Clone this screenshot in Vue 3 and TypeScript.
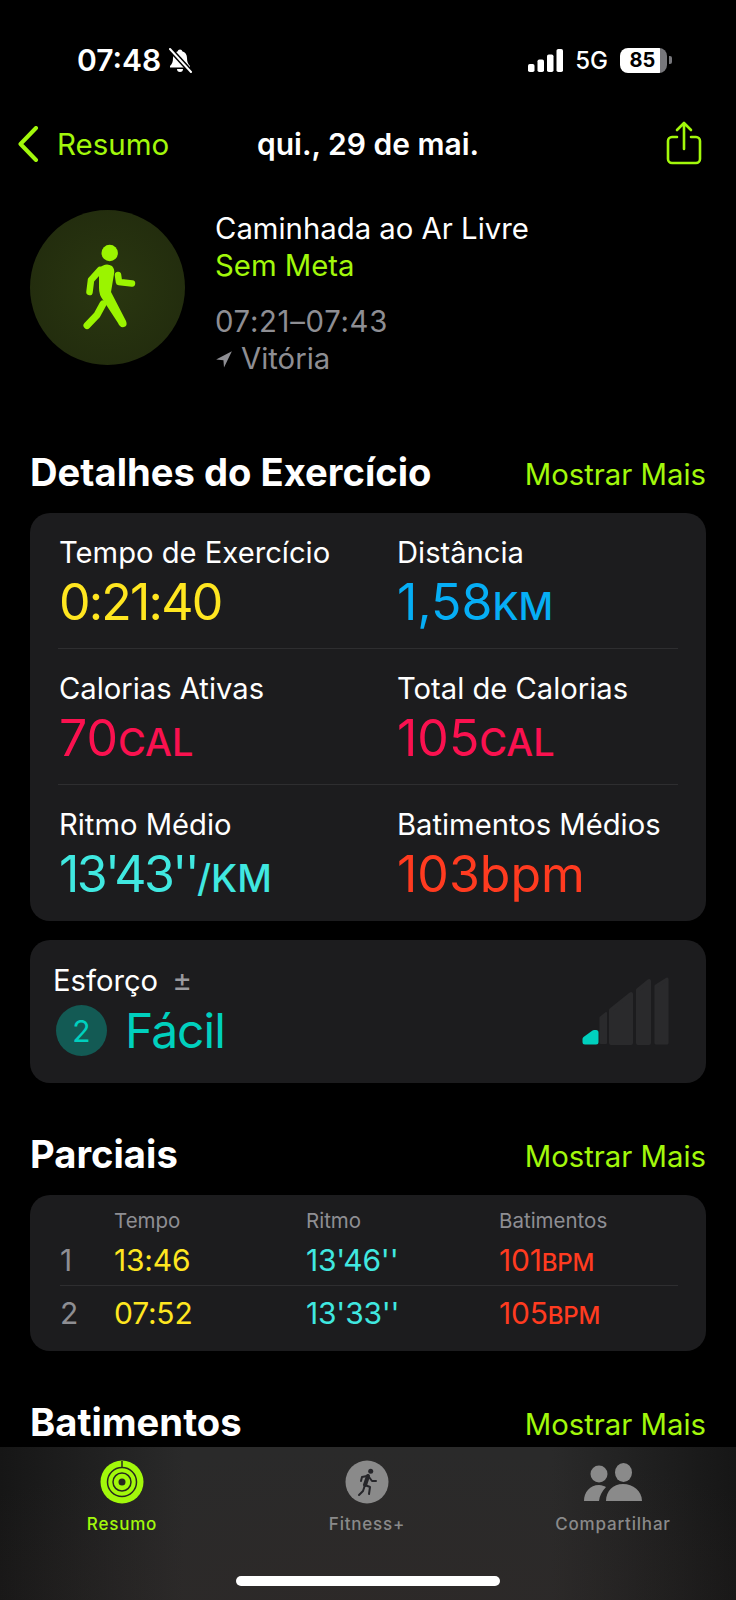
<script setup lang="ts">
interface Metric {
  label: string
  value: string
  unit?: string
  color: string
  spacing?: number
}

const metrics: Metric[] = [
  { label: 'Tempo de Exercício', value: '0:21:40', color: '#ffe620', spacing: -1.8 },
  { label: 'Distância', value: '1,58', unit: 'KM', color: '#06aef5' },
  { label: 'Calorias Ativas', value: '70', unit: 'CAL', color: '#fa114f' },
  { label: 'Total de Calorias', value: '105', unit: 'CAL', color: '#fa114f' },
  { label: 'Ritmo Médio', value: "13'43''", unit: '/KM', color: '#40e8e0', spacing: -2.6 },
  { label: 'Batimentos Médios', value: '103bpm', color: '#ff3b20' }
]

const splits = [
  { n: 1, time: '13:46', pace: "13'46''", bpm: '101' },
  { n: 2, time: '07:52', pace: "13'33''", bpm: '105' }
]
</script>

<template>
  <div class="page">
    <div class="status">
      <div class="status-left">
        <span class="clock">07:48</span>
        <svg class="bell" viewBox="0 0 26 26" width="26" height="26">
          <path d="M13 2.500c-1.300 0-2 .8-2.200 1.800C7.500 5.200 6 7.800 6 11c0 4-1 6-3 8v1.500h20V19c-2-2-3-4-3-8 0-3.200-1.500-5.800-4.800-6.700C15 3.300 14.300 2.500 13 2.500z" fill="#fff" />
          <path d="M10 22h6a3 3 0 0 1-6 0z" fill="#fff" />
          <path d="M3 2l21 23" stroke="#000" stroke-width="5" />
          <path d="M3 2l21 23" stroke="#fff" stroke-width="2" stroke-linecap="round" />
        </svg>
      </div>
      <div class="status-right">
        <svg viewBox="0 0 36 23" width="36" height="23">
          <rect x="0" y="15" width="6.500" height="8" rx="1.800" fill="#fff" />
          <rect x="9.500" y="10.500" width="6.500" height="12.500" rx="1.800" fill="#fff" />
          <rect x="19" y="5.500" width="6.500" height="17.500" rx="1.800" fill="#fff" />
          <rect x="28.500" y="0" width="6.500" height="23" rx="1.800" fill="#fff" />
        </svg>
        <span class="net">5G</span>
        <span class="battery"><span class="battery-num">85</span></span>
        <span class="battery-nub"></span>
      </div>
    </div>

    <div class="nav">
      <div class="nav-back">
        <svg viewBox="0 0 22 36" width="22" height="36">
          <path d="M19 2L3.500 18 19 34" fill="none" stroke="#a2f80b" stroke-width="4" stroke-linecap="round" stroke-linejoin="round" />
        </svg>
        <span>Resumo</span>
      </div>
      <div class="nav-title">qui., 29 de mai.</div>
      <svg class="nav-share" viewBox="0 0 36 44" width="36" height="44">
        <path d="M11 16H6a4 4 0 0 0-4 4v18a4 4 0 0 0 4 4h24a4 4 0 0 0 4-4V20a4 4 0 0 0-4-4h-5" fill="none" stroke="#a2f80b" stroke-width="2.600" stroke-linecap="round" />
        <path d="M18 28V2M11 9l7-7 7 7" fill="none" stroke="#a2f80b" stroke-width="2.600" stroke-linecap="round" stroke-linejoin="round" />
      </svg>
    </div>

    <div class="hero">
      <div class="hero-icon">
        <svg viewBox="0 0 155 155" width="155" height="155">
          <circle cx="79.700" cy="43" r="8.200" fill="#9bf400" />
          <path d="M69 58Q76 52 82 56Q85 59 84 64L81 82L96 111Q98 116 94 117Q90 118 88 113L73 90Q69 85 69 78z" fill="#9bf400" />
          <path d="M70 60L61 70L59.500 82" fill="none" stroke="#9bf400" stroke-width="6.500" stroke-linecap="round" stroke-linejoin="round" />
          <path d="M88 65L89 72L102 73.500" fill="none" stroke="#9bf400" stroke-width="6.500" stroke-linecap="round" stroke-linejoin="round" />
          <path d="M73 94L67 105L57 115.500" fill="none" stroke="#9bf400" stroke-width="7" stroke-linecap="round" stroke-linejoin="round" />
        </svg>
      </div>
      <div class="hero-text">
        <div class="hero-title">Caminhada ao Ar Livre</div>
        <div class="hero-goal">Sem Meta</div>
        <div class="hero-time">07:21–07:43</div>
        <div class="hero-place">
          <svg viewBox="0 0 16 16" width="18" height="18">
            <path d="M15 1L1 8.500l6.500.5.500 6.500z" fill="#8e8e93" />
          </svg>
          <span>Vitória</span>
        </div>
      </div>
    </div>

    <div class="section-head first">
      <h2>Detalhes do Exercício</h2>
      <span class="more">Mostrar Mais</span>
    </div>

    <div class="card metrics">
      <div v-for="m in metrics" :key="m.label" class="metric">
        <div class="metric-label">{{ m.label }}</div>
        <div class="metric-value" :style="{ color: m.color }"><span :style="{ letterSpacing: (m.spacing ?? 0) + 'px' }">{{ m.value }}</span><span v-if="m.unit" class="metric-unit">{{ m.unit }}</span></div>
      </div>
    </div>

    <div class="card effort">
      <div class="effort-text">
        <div class="effort-label">Esforço <span class="plusminus">±</span></div>
        <div class="effort-value">
          <span class="badge">2</span>
          <span class="effort-name">Fácil</span>
        </div>
      </div>
      <svg class="effort-bars" viewBox="0 0 88 68" width="88" height="68">
        <path d="M18.500 40.500L24 36V66H18.500z" fill="#2a2a2c" stroke="#2a2a2c" stroke-width="2" stroke-linejoin="round" />
        <path d="M29 33L49 17V66H29z" fill="#2a2a2c" stroke="#2a2a2c" stroke-width="4" stroke-linejoin="round" />
        <path d="M56 13L67 4V66H56z" fill="#2a2a2c" stroke="#2a2a2c" stroke-width="4" stroke-linejoin="round" />
        <path d="M74 9L85 2V66H74z" fill="#2a2a2c" stroke="#2a2a2c" stroke-width="3" stroke-linejoin="round" />
        <path d="M3 62L12 55.500H14V65H3z" fill="#00d0be" stroke="#00d0be" stroke-width="5" stroke-linejoin="round" />
      </svg>
    </div>

    <div class="section-head">
      <h2>Parciais</h2>
      <span class="more">Mostrar Mais</span>
    </div>

    <div class="card splits">
      <div class="split-head">
        <span></span>
        <span>Tempo</span>
        <span>Ritmo</span>
        <span>Batimentos</span>
      </div>
      <div v-for="s in splits" :key="s.n" class="split-row">
        <span class="split-n">{{ s.n }}</span>
        <span class="split-time">{{ s.time }}</span>
        <span class="split-pace">{{ s.pace }}</span>
        <span class="split-bpm">{{ s.bpm }}<small>BPM</small></span>
      </div>
    </div>

    <div class="section-head">
      <h2>Batimentos</h2>
      <span class="more">Mostrar Mais</span>
    </div>

    <div class="tabbar">
      <div class="tab active">
        <svg viewBox="0 0 44 44" width="44" height="44">
          <circle cx="22" cy="22" r="21.500" fill="#a2f80b" />
          <circle cx="22" cy="22" r="14.500" fill="none" stroke="#26281f" stroke-width="1.500" />
          <circle cx="22" cy="22" r="9" fill="none" stroke="#26281f" stroke-width="1.500" />
          <circle cx="22" cy="22" r="3.500" fill="#26281f" />
          <path d="M22 1v7" stroke="#26281f" stroke-width="1.500" />
        </svg>
        <span>Resumo</span>
      </div>
      <div class="tab">
        <svg viewBox="0 0 44 44" width="44" height="44">
          <circle cx="22" cy="22" r="21.500" fill="#8a8a8a" />
          <circle cx="25.700" cy="11.300" r="2.500" fill="#26262a" />
          <path d="M23 16L20 25" stroke="#26262a" stroke-width="4" stroke-linecap="round" />
          <path d="M22 16L17 17L16 21M24 17L27 21L31 21M20 25L25 27L24 34M20 25L18 31L14 35" fill="none" stroke="#26262a" stroke-width="2" stroke-linecap="round" stroke-linejoin="round" />
        </svg>
        <span>Fitness+</span>
      </div>
      <div class="tab">
        <svg viewBox="0 0 58 40" width="58" height="40">
          <ellipse cx="15" cy="12" rx="8.500" ry="8.500" fill="#8a8a8a" />
          <ellipse cx="39.500" cy="10.500" rx="8.500" ry="9.500" fill="#8a8a8a" />
          <path d="M0 39c0-9 6-16 15-16 3 0 5 1 7 2-4 4-6.500 9-7 14z" fill="#8a8a8a" />
          <path d="M22 39c0-10 7-17 17-17s19 7 19 17z" fill="#8a8a8a" />
        </svg>
        <span>Compartilhar</span>
      </div>
      <div class="home-bar"></div>
    </div>
  </div>
</template>

<style>
html, body {
  margin: 0;
  background: #000;
}
</style>

<style scoped>
.page {
  position: relative;
  width: 736px;
  height: 1600px;
  overflow: hidden;
  background: #000;
  color: #fff;
  font-family: Inter, "Liberation Sans", sans-serif;
  box-sizing: border-box;
  padding: 0 30px;
}

.status {
  height: 106px;
  display: flex;
  justify-content: space-between;
  align-items: flex-end;
  padding: 0 34px 30px 47px;
  box-sizing: border-box;
}
.status-left, .status-right { display: flex; align-items: center; }
.clock { font-size: 30px; font-weight: 600; line-height: 32px; }
.bell { margin-left: 6px; }
.status-right { height: 32px; }
.net { font-size: 24px; font-weight: 500; margin: 0 12px 0 11px; }
.battery {
  width: 47px;
  height: 25px;
  border-radius: 8px;
  background: linear-gradient(90deg, #fff 0 85%, #77777b 85%);
  display: flex;
  align-items: center;
  justify-content: center;
}
.battery-num { color: #000; font-size: 20px; font-weight: 700; padding-right: 2px; }
.battery-nub {
  width: 3px;
  height: 8px;
  margin-left: 2px;
  border-radius: 0 2px 2px 0;
  background: #77777b;
}

.nav {
  height: 76px;
  margin: 0 4px 0 -13px;
  display: grid;
  grid-template-columns: 240px 1fr auto;
  align-items: center;
}
.nav-back { display: flex; align-items: center; gap: 18px; color: #a2f80b; font-size: 29.5px; }
.nav-title { font-size: 30px; font-weight: 600; }
.nav-share { margin-top: -2px; }

.hero {
  display: flex;
  gap: 30px;
  margin-top: 28px;
  height: 172px;
}
.hero-icon {
  width: 155px;
  height: 155px;
  border-radius: 50%;
  background: radial-gradient(circle, #2a3710, #20290d);
  flex-shrink: 0;
}
.hero-text { font-size: 29.3px; line-height: 37px; }
.hero-goal { color: #a2f80b; }
.hero-time { color: #8e8e93; margin-top: 19px; letter-spacing: 0.7px; }
.hero-place { color: #8e8e93; display: flex; align-items: center; gap: 8px; margin-top: 0; }

.section-head {
  display: flex;
  justify-content: space-between;
  align-items: center;
  height: 46px;
  margin: 48px 0 0 0;
}
.section-head.first { margin-top: 67px; }
.section-head h2 { margin: 0; font-size: 38.2px; font-weight: 700; }
.more { color: #a2f80b; font-size: 29.3px; padding-top: 5px; }

.card {
  background: #1c1c1e;
  border-radius: 20px;
}

.metrics {
  margin-top: 18px;
  height: 408px;
  padding: 0 28px;
  box-sizing: border-box;
  display: grid;
  grid-template-columns: 338px 1fr;
  grid-template-rows: repeat(3, 136px);
}
.metric {
  padding-top: 22px;
  box-sizing: border-box;
  border-bottom: 1px solid #2e2e30;
  white-space: nowrap;
}
.metric:nth-child(n+5) { border-bottom: none; }
.metric-label { font-size: 29.2px; line-height: 36px; margin-left: 1px; }
.metric-value { font-size: 50px; line-height: 62px; margin-left: 1px; }
.metric-unit { font-size: 38px; font-weight: 500; }

.effort {
  margin-top: 19px;
  height: 143px;
  display: flex;
  justify-content: space-between;
  align-items: flex-start;
  padding: 0 36px 0 23px;
  box-sizing: border-box;
}
.effort-text { padding-top: 22px; }
.effort-label { font-size: 29.2px; line-height: 36px; }
.plusminus { color: #9a9a9e; font-size: 30px; margin-left: 6px; }
.effort-value { display: flex; align-items: center; gap: 18px; margin: 6px 0 0 3px; }
.badge {
  width: 51px;
  height: 51px;
  border-radius: 50%;
  background: #135a54;
  color: #00d0be;
  font-size: 30px;
  display: flex;
  align-items: center;
  justify-content: center;
}
.effort-name { color: #00d0be; font-size: 48px; line-height: 51px; letter-spacing: -1px; }
.effort-bars { margin-top: 37px; }

.splits {
  margin-top: 18px;
  height: 156px;
  padding: 14px 28px 0 30px;
  box-sizing: border-box;
}
.split-head, .split-row {
  display: grid;
  grid-template-columns: 54px 192px 193px 1fr;
}
.split-head { color: #8e8e93; font-size: 20.5px; line-height: 24px; }
.split-row { font-size: 30px; line-height: 50px; height: 50px; padding-top: 2px; letter-spacing: -0.2px; }
.split-row:nth-child(2) { border-bottom: 1px solid #2e2e30; height: 50px; }
.split-row:last-child { height: 50px; }
.split-n { color: #8e8e93; }
.split-time { color: #ffe620; }
.split-pace { color: #40e8e0; }
.split-bpm { color: #ff3b20; }
.split-bpm small { font-size: 24px; font-weight: 500; }

.tabbar {
  position: absolute;
  left: 0;
  right: 0;
  bottom: 0;
  height: 153px;
  background: radial-gradient(ellipse 70% 100% at 50% 100%, #30282670, transparent), linear-gradient(90deg, #161616, #2a2a2a 25%, #2a2a2a 75%, #161616);
}
.tab {
  position: absolute;
  top: 13px;
  display: flex;
  flex-direction: column;
  align-items: center;
  width: 160px;
  color: #8a8a8a;
  font-size: 17px;
  font-weight: 500;
  letter-spacing: 0.8px;
}
.tab:nth-child(1) { left: 42px; }
.tab:nth-child(2) { left: 287px; }
.tab:nth-child(3) { left: 533px; }
.tab svg { height: 44px; }
.tab span { margin-top: 10px; }
.tab.active { color: #a2f80b; }
.home-bar {
  position: absolute;
  left: 236px;
  top: 129px;
  width: 264px;
  height: 10px;
  border-radius: 5px;
  background: #fff;
}
</style>
